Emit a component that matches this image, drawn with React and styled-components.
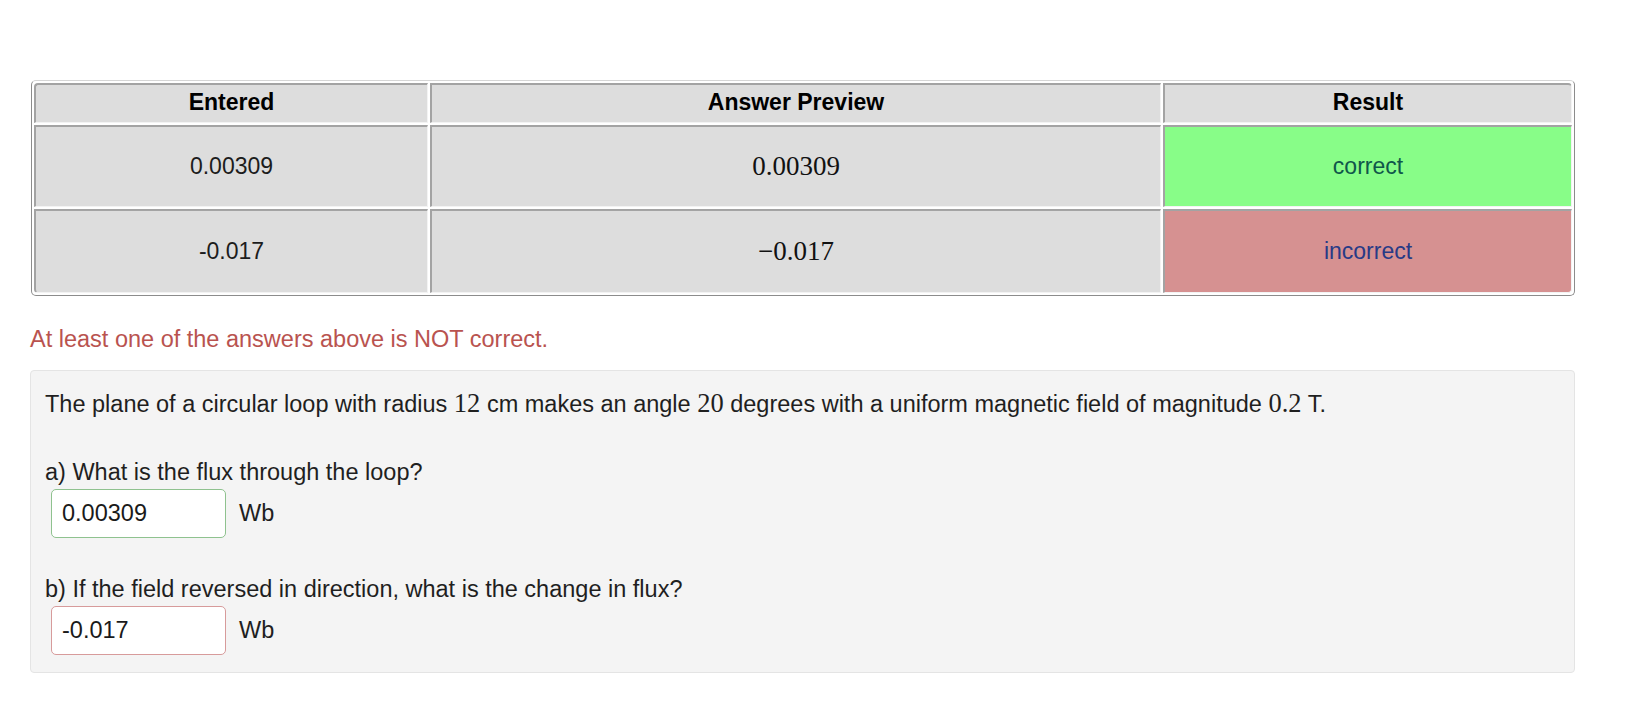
import React from "react";
import styled, { createGlobalStyle } from "styled-components";

const GlobalStyle = createGlobalStyle`
  html, body {
    margin: 0;
    padding: 0;
    background: #ffffff;
  }
  body {
    font-family: "Liberation Sans", Arial, Helvetica, sans-serif;
    font-size: 23.5px;
    color: #1f1f1f;
  }
`;

const Page = styled.div`
  padding: 80px 0 0 30px;
  width: 1545px;
`;

const ResultsTable = styled.div`
  display: grid;
  grid-template-columns: 394px 731px 1fr;
  grid-template-rows: 40px 82px 84px;
  gap: 2px;
  padding: 2px;
  width: 1544px;
  margin-left: 1px;
  box-sizing: border-box;
  background: #ffffff;
  border: 1px solid #8c8c8c;
  border-top-color: #d6d6d6;
  border-radius: 5px;
`;

const tones = {
  plain: { bg: "#dddddd", fg: "#1c1c1c" },
  ok: { bg: "#88fd88", fg: "#0f574a" },
  bad: { bg: "#d69191", fg: "#283a86" },
};

const Cell = styled.div`
  display: flex;
  align-items: center;
  justify-content: center;
  background: ${(p) => tones[p.$tone || "plain"].bg};
  color: ${(p) => tones[p.$tone || "plain"].fg};
  border-top: 2px solid #a3a3a3;
  border-left: 2px solid #a3a3a3;
  border-right: 1px solid #f3f3f3;
  border-bottom: 1px solid #f3f3f3;
  border-radius: ${(p) => p.$corner || "0"};
  font-size: 23px;
`;

const HeadCell = styled(Cell)`
  font-weight: bold;
  color: #000000;
  padding-bottom: 2px;
`;

const MathNum = styled.span`
  font-family: "Liberation Serif", "Times New Roman", serif;
  font-size: 27px;
  color: #111111;
`;

const Notice = styled.div`
  margin: 27px 0 0 0;
  color: #b9534f;
  line-height: 33px;
`;

const Well = styled.div`
  margin-top: 14px;
  width: 1545px;
  box-sizing: border-box;
  padding: 16px 14px 17px;
  background: #f4f4f4;
  border: 1px solid #e4e4e4;
  border-radius: 4px;
  line-height: 33px;
`;

const Line = styled.div`
  line-height: 33px;
  color: #1f1f1f;
`;

const InlineMath = styled.span`
  font-family: "Liberation Serif", "Times New Roman", serif;
  font-size: 26.5px;
`;

const Gap = styled.div`
  height: 35px;
`;

const AnswerRow = styled.div`
  display: flex;
  align-items: center;
  gap: 13px;
  margin-left: 6px;
`;

const AnswerInput = styled.input`
  width: 175px;
  height: 49px;
  box-sizing: border-box;
  padding: 0 10px;
  font-family: "Liberation Sans", Arial, sans-serif;
  font-size: 23.5px;
  color: #1a1a1a;
  background: #ffffff;
  border: 1.5px solid ${(p) => (p.$ok ? "#8fc28f" : "#d79b9b")};
  border-radius: 5px;
  outline: none;
`;

const Unit = styled.span`
  color: #1f1f1f;
`;

const rows = [
  { entered: "0.00309", preview: "0.00309", ok: true },
  { entered: "-0.017", preview: "\u22120.017", ok: false },
];

export default function App() {
  return (
    <Page>
      <GlobalStyle />
      <ResultsTable>
        <HeadCell $corner="4px 0 0 0">Entered</HeadCell>
        <HeadCell>Answer Preview</HeadCell>
        <HeadCell $corner="0 4px 0 0">Result</HeadCell>
        {rows.map((r, i) => (
          <React.Fragment key={i}>
            <Cell $corner={i === rows.length - 1 ? "0 0 0 4px" : "0"}>
              {r.entered}
            </Cell>
            <Cell>
              <MathNum>{r.preview}</MathNum>
            </Cell>
            <Cell
              $tone={r.ok ? "ok" : "bad"}
              $corner={i === rows.length - 1 ? "0 0 4px 0" : "0"}
            >
              {r.ok ? "correct" : "incorrect"}
            </Cell>
          </React.Fragment>
        ))}
      </ResultsTable>

      <Notice>At least one of the answers above is NOT correct.</Notice>

      <Well>
        <Line>
          The plane of a circular loop with radius <InlineMath>12</InlineMath>{" "}
          cm makes an angle <InlineMath>20</InlineMath> degrees with a uniform
          magnetic field of magnitude <InlineMath>0.2</InlineMath> T.
        </Line>
        <Gap />
        <Line>a) What is the flux through the loop?</Line>
        <AnswerRow>
          <AnswerInput $ok defaultValue="0.00309" />
          <Unit>Wb</Unit>
        </AnswerRow>
        <Gap />
        <Line>b) If the field reversed in direction, what is the change in flux?</Line>
        <AnswerRow>
          <AnswerInput defaultValue="-0.017" />
          <Unit>Wb</Unit>
        </AnswerRow>
      </Well>
    </Page>
  );
}
